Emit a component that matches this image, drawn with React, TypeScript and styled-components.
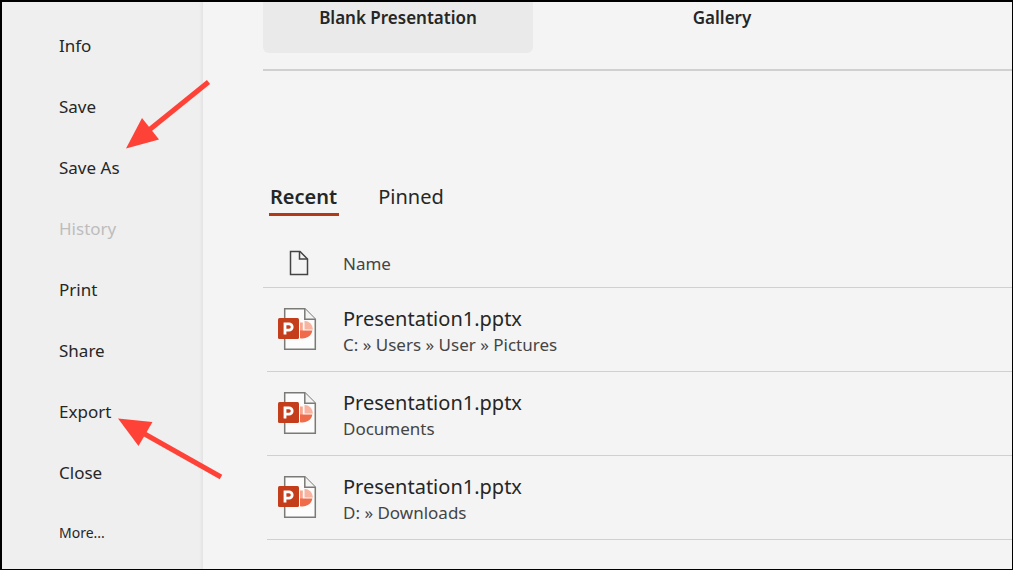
import React from "react";
import styled, { createGlobalStyle } from "styled-components";

const GlobalStyle = createGlobalStyle`
  * { box-sizing: border-box; }
  body { margin: 0; background: #f4f4f4; }
  body, button { font-family: "Noto Sans", "Open Sans", sans-serif; color: #262626; }
`;

const Frame = styled.div`
  position: relative;
  display: flex;
  min-height: 100vh;
  border: solid #000;
  border-width: 2px 1px 1px 2px;
  background: #f4f4f4;
  overflow: hidden;
`;

const Sidebar = styled.nav`
  flex: 0 0 201px;
  display: flex;
  flex-direction: column;
  padding-top: 13px;
  background: linear-gradient(to left, #e3e3e3 0, #e9e9e9 2px, #efefef 4px);
`;

const NavItem = styled.button<{ $small?: boolean }>`
  height: ${(p) => (p.$small ? 60 : 61)}px;
  padding: 0 0 0 57px;
  border: 0;
  background: none;
  text-align: left;
  font-size: ${(p) => (p.$small ? 14 : 17)}px;
  line-height: 24px;
  &:disabled { color: #bdbdbd; }
`;

const Main = styled.main`
  flex: 1;
  min-width: 0;
  padding-left: 60px;
`;

const Templates = styled.section`
  display: flex;
  gap: 54px;
  height: 69px;
  border-bottom: 2px solid #d0d0d0;
`;

const TemplateCard = styled.button<{ $active?: boolean }>`
  width: 270px;
  height: 51px;
  padding: 4px 0 0;
  border: 0;
  border-radius: 0 0 6px 6px;
  background: ${(p) => (p.$active ? "#eaeaea" : "transparent")};
  display: flex;
  justify-content: center;
  font-size: 17px;
  font-weight: 600;
  line-height: 24px;
`;

const Tabs = styled.div`
  display: flex;
  gap: 38px;
  padding: 110px 0 0 6px;
`;

const Tab = styled.button<{ $active?: boolean }>`
  height: 35px;
  padding: 0 2px 0 1px;
  border: 0;
  border-bottom: 3px solid ${(p) => (p.$active ? "#b03a17" : "transparent")};
  background: none;
  font-size: 20px;
  font-weight: ${(p) => (p.$active ? 600 : 400)};
  line-height: 28px;
`;

const FileTable = styled.table`
  display: block;
  margin-top: 24px;
`;

const Group = styled.tbody`
  display: block;
`;

const HeadGroup = styled.thead`
  display: block;
`;

const HeadRow = styled.tr`
  display: grid;
  grid-template-columns: 80px 1fr;
  align-items: center;
  height: 48px;
  border-bottom: 1px solid #d0d0d0;
`;

const HeadCell = styled.th`
  padding: 0;
  text-align: left;
  font-size: 17px;
  font-weight: 400;
  line-height: 24px;
  color: #444;
`;

const FileRow = styled.tr`
  display: grid;
  grid-template-columns: 76px 1fr;
  align-items: center;
  height: 84px;
  margin-left: 4px;
  border-bottom: 1px solid #d0d0d0;
`;

const FileCell = styled.td`
  padding: 0;
`;

const FileName = styled.div`
  padding-top: 3px;
  font-size: 20px;
  line-height: 28px;
`;

const FilePath = styled.div`
  font-size: 17px;
  line-height: 24px;
  color: #444;
`;

const Glyph = styled.svg<{ $indent: number }>`
  display: block;
  margin: 0 0 2px ${(p) => p.$indent}px;
`;

const Arrows = styled.svg`
  position: absolute;
  top: 0;
  left: 0;
  pointer-events: none;
`;

const DocumentIcon = () => (
  <Glyph $indent={26} width="20" height="26" viewBox="0 0 20 26" fill="none" stroke="#444" strokeWidth="1.5" role="img" aria-label="File type">
    <path d="M1.5 1.5H11L18.5 9V24.5H1.5Z" />
    <path d="M10.5 1.5V9H18.5" />
  </Glyph>
);

const PowerPointIcon = () => (
  <Glyph $indent={11} width="40" height="44" viewBox="0 0 40 44" role="img" aria-label="PowerPoint presentation">
    <path d="M6.7 1.7H26.8L37.3 12.2V42.3H6.7Z" fill="#fcfcfc" stroke="#7a7a76" strokeWidth="1.5" />
    <path d="M26.8 1.7V12.2H37.3" fill="#f4f4f4" stroke="#7a7a76" strokeWidth="1.5" />
    <path d="M22 15.5H24.8V24H22Z" fill="#f6a58e" />
    <path d="M26.5 13.7A9 9 0 0 1 35 22.6H26.5Z" fill="#f8b4a1" />
    <path d="M22 23.5H34.3A10 8.5 0 0 1 22 31.2Z" fill="#f06b49" />
    <rect x="0" y="11" width="21" height="21" rx="1.5" fill="#c43e1c" />
    <path d="M7 27.5V16.8H11A3.2 3.2 0 0 1 11 23.2H7" fill="none" stroke="#fff" strokeWidth="2.8" />
  </Glyph>
);

const navItems = [
  { label: "Info" },
  { label: "Save" },
  { label: "Save As" },
  { label: "History", disabled: true },
  { label: "Print" },
  { label: "Share" },
  { label: "Export" },
  { label: "Close" },
  { label: "More...", small: true },
];

const files = [
  { name: "Presentation1.pptx", path: "C: » Users » User » Pictures" },
  { name: "Presentation1.pptx", path: "Documents" },
  { name: "Presentation1.pptx", path: "D: » Downloads" },
];

export default function App() {
  return (
    <>
      <GlobalStyle />
      <Frame>
        <Sidebar aria-label="File">
          {navItems.map((item) => (
            <NavItem key={item.label} disabled={item.disabled} $small={item.small}>
              {item.label}
            </NavItem>
          ))}
        </Sidebar>
        <Main>
          <Templates>
            <TemplateCard $active>Blank Presentation</TemplateCard>
            <TemplateCard>Gallery</TemplateCard>
          </Templates>
          <Tabs role="tablist">
            <Tab role="tab" aria-selected="true" $active>Recent</Tab>
            <Tab role="tab" aria-selected="false">Pinned</Tab>
          </Tabs>
          <FileTable>
            <HeadGroup>
              <HeadRow>
                <HeadCell scope="col"><DocumentIcon /></HeadCell>
                <HeadCell scope="col">Name</HeadCell>
              </HeadRow>
            </HeadGroup>
            <Group>
              {files.map((file) => (
                <FileRow key={file.path}>
                  <FileCell><PowerPointIcon /></FileCell>
                  <FileCell>
                    <FileName>{file.name}</FileName>
                    <FilePath>{file.path}</FilePath>
                  </FileCell>
                </FileRow>
              ))}
            </Group>
          </FileTable>
        </Main>
        <Arrows width="240" height="500" viewBox="2 2 240 500" aria-hidden="true">
          <g fill="#ff4238" stroke="#ff4238">
            <path d="M208.5 82L146 132.5" strokeWidth="5" />
            <path d="M126 148.5L142 118L159 139.5Z" stroke="none" />
            <path d="M221 477L142 432.5" strokeWidth="5" />
            <path d="M118 418.5L152.5 422L138.5 446Z" stroke="none" />
          </g>
        </Arrows>
      </Frame>
    </>
  );
}
